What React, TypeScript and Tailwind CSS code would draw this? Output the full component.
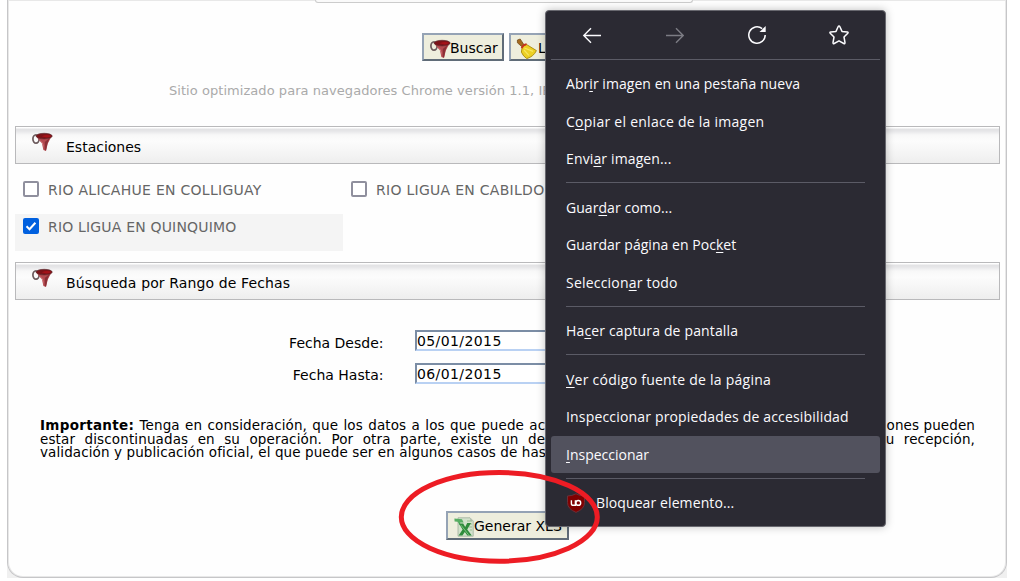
import type { ReactNode } from "react";

function Funnel() {
  return (
    <svg width="22" height="20" viewBox="0 0 22 20" className="shrink-0">
      <ellipse cx="4" cy="7" rx="3.1" ry="4.1" fill="none" stroke="#6b5a5c" strokeWidth="1.7" />
      <path d="M3.4 3.8 20 3.6 15.8 11.4 14 19 11.4 18 10 11.6Z" fill="#b5494f" />
      <path d="M12.8 10 17.6 6 15.4 11.4 14 18.6 12.8 18Z" fill="#8a2f36" />
      <path d="M7.4 7.4 11 11.2 12 17 10.4 11.8Z" fill="#d98a8c" />
      <ellipse cx="12.2" cy="4.1" rx="8" ry="2.8" fill="#7c1218" stroke="#5c2c30" strokeWidth=".7" />
      <path d="M9.6 4.3Q15.4 1.9 19.6 4.1 15.4 6.6 9.6 4.3Z" fill="#a51219" />
    </svg>
  );
}

function Broom() {
  return (
    <svg width="22" height="22" viewBox="0 0 22 22" className="shrink-0">
      <path d="M1.4 2 4.2 1 8 6.8 5.6 8.4 1.4 4.8Z" fill="#a46a20" stroke="#6d4311" strokeWidth=".7" />
      <path d="M6.2 8.6 10.4 6.4 20.4 12.6Q17.6 18.6 10.8 20.6 7.2 18.4 5.4 14.2Z" fill="#ecd024" stroke="#a88909" strokeWidth=".9" />
      <path d="M8.4 10 17 13.4M8 12 12.8 17.4" stroke="#f8e660" strokeWidth="1.2" />
      <path d="M5.6 10.2Q7 7 10.6 6.2" fill="none" stroke="#c8321e" strokeWidth="1.7" />
    </svg>
  );
}

function Excel() {
  return (
    <svg width="20" height="20" viewBox="0 0 20 20" className="shrink-0">
      <path d="M4 .8H16L19.2 4V19.2H4Z" fill="#d2e2cb" stroke="#a0ae9c" strokeWidth=".8" />
      <path d="M16 .8V4H19.2Z" fill="#b8c4b4" />
      <path d="M13 4H18M15 7H18M15 10H18M16 13H18" stroke="#9bbd94" />
      <path d="M.4 1.6 8 2.2 9.6 5.4H6.2L6 8.2 3.6 4.8.6 4.6Z" fill="#56ad62" />
      <path d="M4.8 6.4H9.2L11.2 10 13.2 6H17L13.2 12.4 17.8 18.6H13.4L10.8 15 8.4 18.4H4.6L8.6 12.6Z" fill="#2f8c3c" />
      <path d="M7 8.2 14.6 17.8" stroke="#7ac47f" />
    </svg>
  );
}

const beveled =
  "flex shrink-0 items-center border-2 border-t-[#95a3b5] border-l-[#95a3b5] border-r-[#606c78] border-b-[#606c78] bg-[#eeeedd] whitespace-nowrap";

function SectionBar({ title, tracking = "" }: { title: string; tracking?: string }) {
  return (
    <div className="flex h-[38px] border border-[#b9b9bb] bg-[linear-gradient(#fff_0px,#fff_1px,#e2e2e4_2px,#e6e6e8_4px,#f8f8f8_8px,#fcfcfc_14px,#eeeeee_100%)]">
      <div className="ml-4 pt-[5px]"><Funnel /></div>
      <h2 className={`ml-[12px] pt-[11px] text-[14px] leading-[18px] ${tracking}`}>{title}</h2>
    </div>
  );
}

function Station({ name, checked = false }: { name: string; checked?: boolean }) {
  return (
    <label className={`flex h-[37px] w-[328px] shrink-0 items-start pl-2 pt-[4px] ${checked ? "bg-[#f4f4f4]" : ""}`}>
      <span className={`flex h-4 w-4 items-center justify-center rounded-[2px] ${checked ? "bg-[#0060df]" : "border-2 border-[#8f8f9d] bg-white"}`}>
        {checked && (
          <svg width="12" height="12" viewBox="0 0 12 12"><path d="M1.5 6.3 4.5 9.2 10.4 2.8" fill="none" stroke="white" strokeWidth="2" /></svg>
        )}
      </span>
      <span className={`ml-[9px] whitespace-nowrap text-[14px] leading-[18px] text-[#666] ${checked ? "tracking-[0.18px]" : "tracking-[0.28px]"}`}>{name}</span>
    </label>
  );
}

function DateField({ label, value, offset }: { label: string; value: string; offset: string }) {
  return (
    <div className="flex h-[21px]">
      <span className={`w-[369px] pr-[0.5px] text-right text-[14px] leading-[18px] ${offset}`}>{label}</span>
      <span className="ml-[31px] w-[180px] border-2 border-t-[#7b8da5] border-l-[#7b8da5] border-r-[#b9d1f3] border-b-[#b9d1f3] bg-white text-[14px] leading-[18px] tracking-[0.4px]">{value}</span>
    </div>
  );
}

function Item({ children, tracking = "", active = false }: { children: ReactNode; tracking?: string; active?: boolean }) {
  return (
    <div className={`mx-[5px] flex h-[37.5px] items-center whitespace-nowrap rounded-[3px] pl-[15px] ${tracking} ${active ? "bg-[#52525e]" : ""}`}>
      <span>{children}</span>
    </div>
  );
}

function Key({ children }: { children: string }) {
  return <span className="underline decoration-1 underline-offset-2">{children}</span>;
}

function Divider() {
  return <div className="mx-5 mt-[4.5px] mb-[5.5px] h-px bg-[#5b5b66]" />;
}

function ContextMenu() {
  return (
    <div className="absolute left-[545px] top-[10px] h-[517px] w-[341px] rounded-[4px] border border-[#68686f] bg-[#2b2a33] font-['Open_Sans','Noto_Sans',sans-serif] text-[14px] text-[#fbfbfe] shadow-[0_0_8px_rgba(0,0,0,0.25)]">
      <div className="mx-[5px] mb-[5px] flex h-[49px] items-center justify-around border-b border-[#5b5b66]">
        <svg width="20" height="20" viewBox="0 0 20 20" fill="none" stroke="#fbfbfe" strokeWidth="1.4"><path d="M19 10.5H1.8M9 3.3 1.8 10.5 9 17.7" /></svg>
        <svg width="20" height="20" viewBox="0 0 20 20" fill="none" stroke="#7c7c84" strokeWidth="1.4"><path d="M2 10.5H19.2M12 3.3 19.2 10.5 12 17.7" /></svg>
        <svg width="20" height="20" viewBox="0 0 20 20" fill="none" stroke="#fbfbfe" strokeWidth="1.5">
          <path d="M18.2 10A8.2 8.2 0 1 1 15.2 3.7" /><path d="M18.7 1V7H12.5Z" fill="#fbfbfe" stroke="none" />
        </svg>
        <svg width="20" height="20" viewBox="0 0 20 20" fill="none" stroke="#fbfbfe" strokeWidth="1.5" strokeLinejoin="round">
          <path d="M10 1Q10.6 1 10.9 1.7L13 6.4 18.3 7Q19.6 7.3 18.8 8.2L15 12 16 17.6Q16 19 14.8 18.5L10 15.8 5.2 18.5Q4 19 4 17.6L5 12 1.2 8.2Q.4 7.3 1.7 7L7 6.4 9.1 1.7Q9.4 1 10 1Z" />
        </svg>
      </div>
      <Item tracking="tracking-[0.05px]">Abr<Key>i</Key>r imagen en una pestaña nueva</Item>
      <Item tracking="tracking-[0.26px]">C<Key>o</Key>piar el enlace de la imagen</Item>
      <Item tracking="tracking-[0.13px]">Envi<Key>a</Key>r imagen...</Item>
      <Divider />
      <Item tracking="tracking-[0.05px]">Guar<Key>d</Key>ar como...</Item>
      <Item tracking="tracking-[0.04px]">Guardar página en Poc<Key>k</Key>et</Item>
      <Item tracking="tracking-[0.2px]">Seleccion<Key>a</Key>r todo</Item>
      <Divider />
      <Item tracking="tracking-[0.15px]">Ha<Key>c</Key>er captura de pantalla</Item>
      <Divider />
      <Item tracking="tracking-[0.25px]"><Key>V</Key>er código fuente de la página</Item>
      <Item tracking="tracking-[0.17px]">Inspeccionar propiedades de accesibilidad</Item>
      <Item active><Key>I</Key>nspeccionar</Item>
      <Divider />
      <div className="ml-5 flex h-[37.5px] items-center whitespace-nowrap tracking-[0.1px]">
        <svg width="20" height="20" viewBox="0 0 20 20" className="mr-[10px]">
          <path d="M10 .8Q14 3 18.5 3V9.5Q18.5 16 10 19.4 1.5 16 1.5 9.5V3Q6 3 10 .8Z" fill="#800000" stroke="#6b3038" />
          <path d="M5.4 7.2V10.4Q5.4 12.3 7.3 12.3H9.4V7.2" fill="none" stroke="white" strokeWidth="1.4" />
          <circle cx="12.3" cy="9.9" r="2.4" fill="none" stroke="white" strokeWidth="1.4" />
        </svg>
        <span>Bloquear elemento...</span>
      </div>
    </div>
  );
}

export default function App() {
  return (
    <div className="relative h-[581px] w-[1020px] overflow-hidden bg-white font-['DejaVu_Sans',sans-serif] text-black">
      <div className="ml-[7px] h-[578px] w-[1000px] bg-[#f0f0f0]">
        <main className="flex h-[578px] flex-col rounded-b-[16px] border-x border-b border-[#c6c6c8] bg-[#fefefe] pl-[7px] pr-[6px] shadow-[inset_0_0_0_1px_#e8e8e8]">
          <div className="ml-[300px] h-[3px] w-[378px] shrink-0 rounded-b-[3px] border-x border-b border-[#cccccc] bg-[#fafafa]" />
          <div className="ml-[407px] mt-[30px] flex h-7 shrink-0 gap-[5px] text-[14px]">
            <div className={`${beveled} w-[82px] pl-[6px]`}><div className="pt-[3px]"><Funnel /></div><span className="-ml-[2px] pt-[2px]">Buscar</span></div>
            <div className={`${beveled} w-[90px] pl-[5px]`}><div className="pt-[3px]"><Broom /></div><span className="pt-[2px]">Limpiar</span></div>
          </div>
          <p className="ml-[154px] mt-[21px] h-[18px] shrink-0 whitespace-nowrap text-[13px] leading-[18px] tracking-[0.05px] text-[#aaa]">Sitio optimizado para navegadores Chrome versión 1.1, IE</p>
          <div className="mt-[26px] shrink-0"><SectionBar title="Estaciones" /></div>
          <div className="mt-[13px] flex shrink-0"><Station name="RIO ALICAHUE EN COLLIGUAY" /><Station name="RIO LIGUA EN CABILDO" /></div>
          <Station name="RIO LIGUA EN QUINQUIMO" checked />
          <div className="mt-[11px] shrink-0"><SectionBar title="Búsqueda por Rango de Fechas" tracking="tracking-[0.12px]" /></div>
          <div className="mt-[30px] flex shrink-0 flex-col gap-3">
            <DateField label="Fecha Desde:" value="05/01/2015" offset="pt-[4px]" />
            <DateField label="Fecha Hasta:" value="06/01/2015" offset="pt-[3px]" />
          </div>
          <div className="ml-[25px] mt-[35px] w-[935px] shrink-0 whitespace-nowrap text-[13.5px] leading-[13.5px] tracking-[0.1px]">
            <p className="flex justify-between"><span className="[word-spacing:1px]"><b className="tracking-[0.3px]">Importante:</b> Tenga en consideración, que los datos a los que puede ac</span><span>ones pueden</span></p>
            <p className="flex justify-between"><span className="tracking-[0.13px] [word-spacing:5px]">estar discontinuadas en su operación. Por otra parte, existe un de</span><span className="[word-spacing:5px]">u recepción,</span></p>
            <p>validación y publicación oficial, el que puede ser en algunos casos de has</p>
          </div>
          <div className={`${beveled} ml-[431px] mt-[51px] h-[29px] w-[123px] pl-[6px] text-[14px]`}><div className="pt-[3px]"><Excel /></div><span className="pt-[3px]">Generar XLS</span></div>
        </main>
      </div>
      <ContextMenu />
      <svg width="204" height="98" viewBox="0 0 204 98" className="pointer-events-none absolute left-[398px] top-[468px]">
        <ellipse cx="101.3" cy="48.9" rx="98" ry="44.3" fill="none" stroke="#ed1c24" strokeWidth="5" />
      </svg>
    </div>
  );
}
